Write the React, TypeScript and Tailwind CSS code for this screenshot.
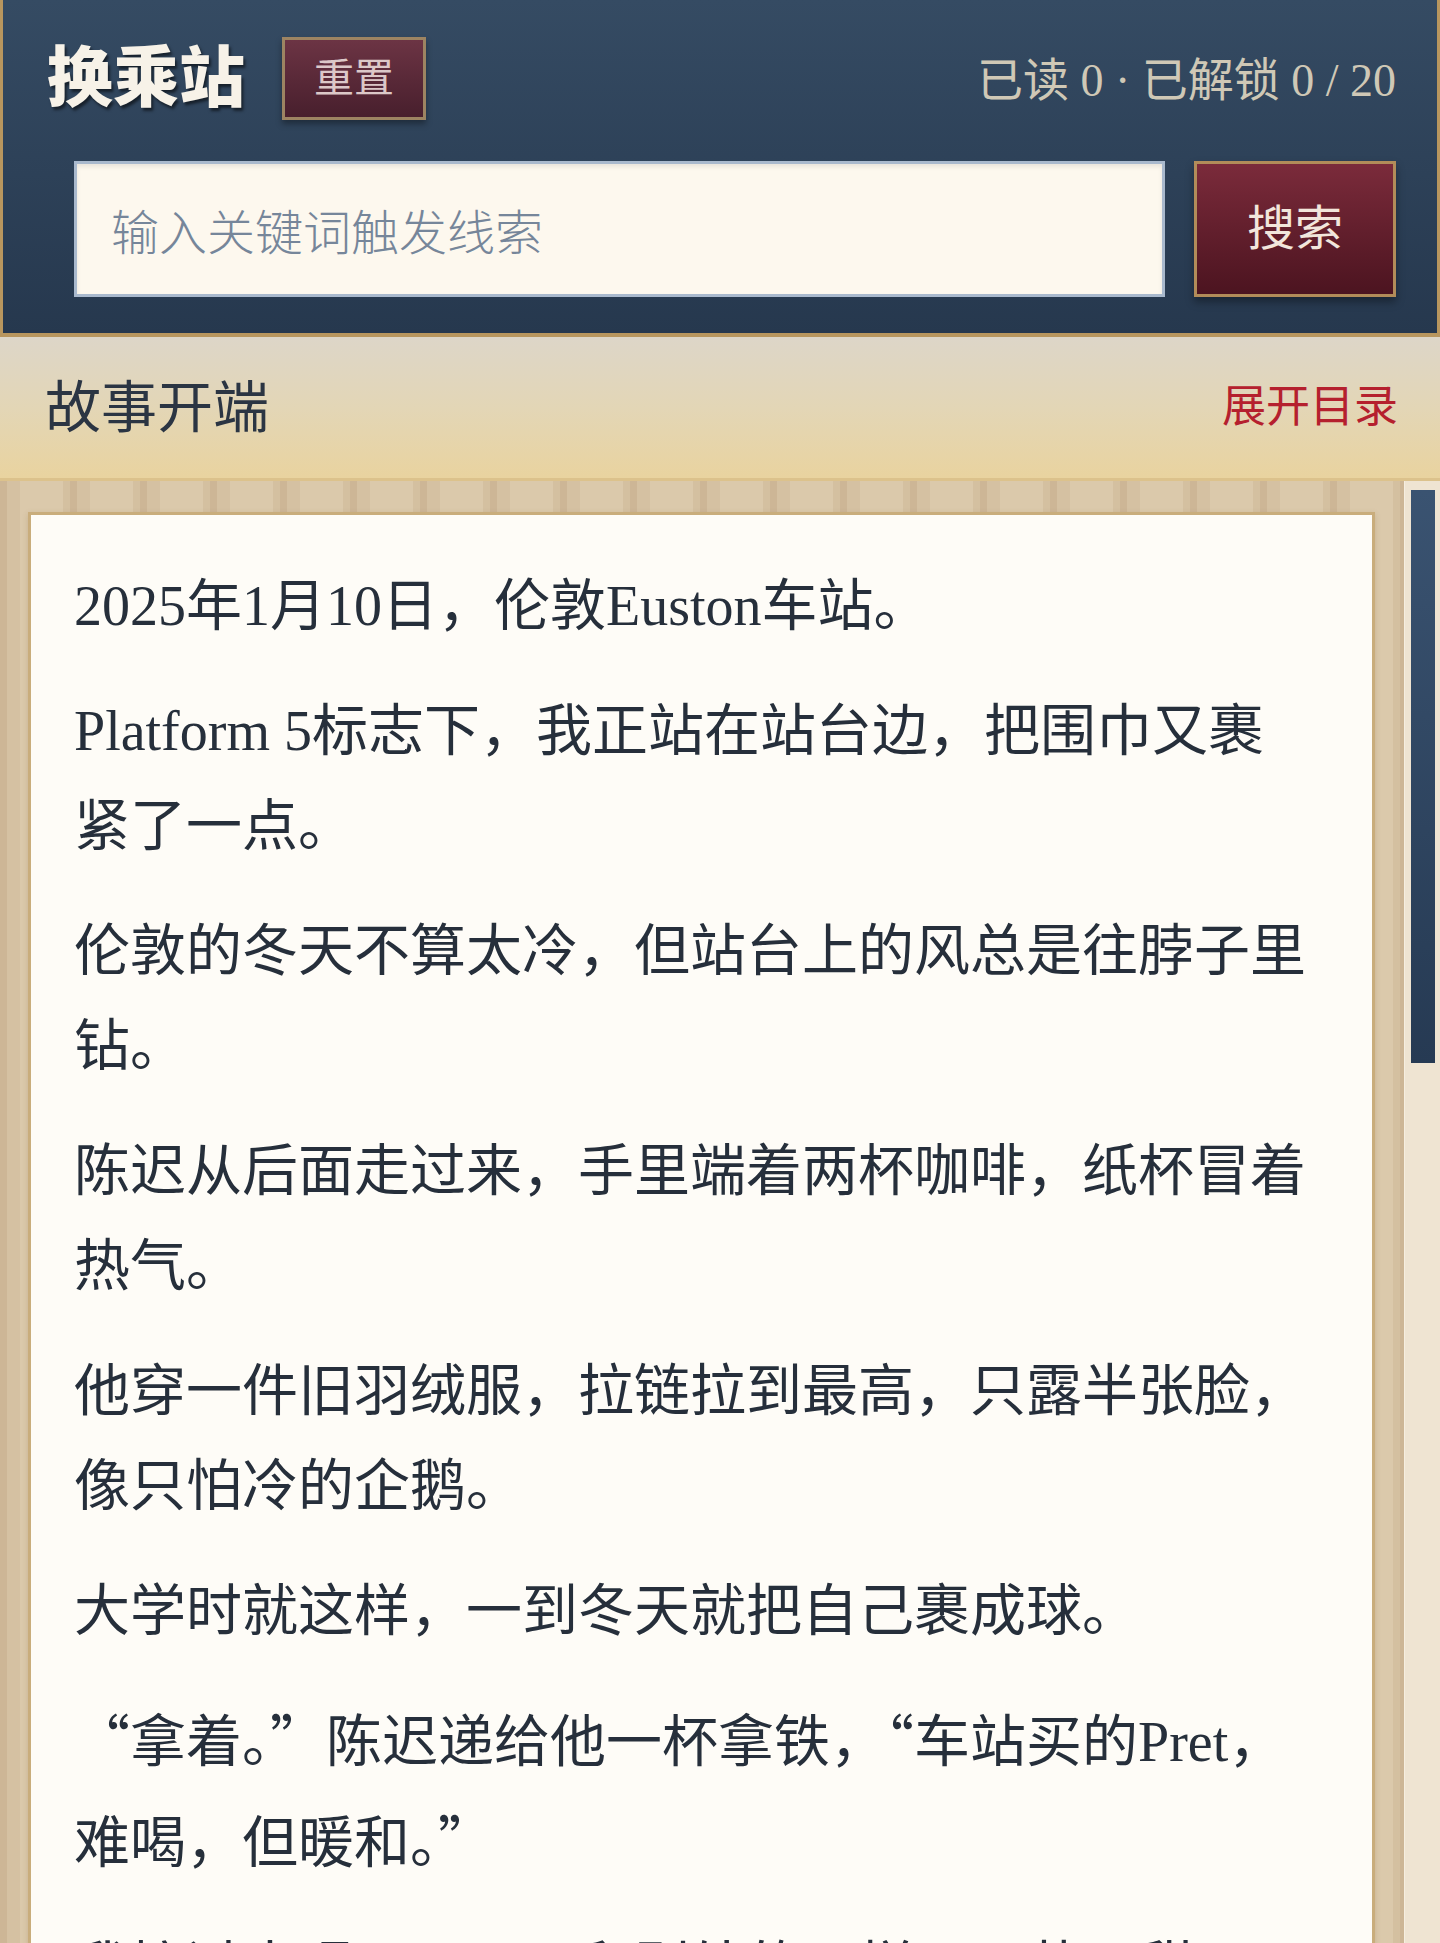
import { useState } from 'react';

const serif = { fontFamily: '"Liberation Serif", "Noto Sans CJK SC", serif' };

const paragraphs = [
  '2025年1月10日，伦敦Euston车站。',
  'Platform 5标志下，我正站在站台边，把围巾又裹紧了一点。',
  '伦敦的冬天不算太冷，但站台上的风总是往脖子里钻。',
  '陈迟从后面走过来，手里端着两杯咖啡，纸杯冒着热气。',
  '他穿一件旧羽绒服，拉链拉到最高，只露半张脸，像只怕冷的企鹅。',
  '大学时就这样，一到冬天就把自己裹成球。',
  '“拿着。”陈迟递给他一杯拿铁，“车站买的Pret，难喝，但暖和。”',
  '我接过来喝了一口，和别处的一样，又苦又甜。',
];

// CJK quotes should take a full-width box, like the rest of the Chinese text
function Line({ text }: { text: string }) {
  const parts = text.split(/([“”])/);
  return (
    <>
      {parts.map((part, i) =>
        part === '“' || part === '”' ? (
          <span key={i} style={{ fontFamily: '"Noto Sans CJK SC", sans-serif' }}>
            {part}
          </span>
        ) : (
          <span key={i}>{part}</span>
        )
      )}
    </>
  );
}

export default function App() {
  const [keyword, setKeyword] = useState('');

  return (
    <div className="h-[1943px] w-[1440px] overflow-hidden flex flex-col bg-[#efe4d2]" style={serif}>
      <header className="border-x-[3px] border-b-[4px] border-[#b8965e] bg-gradient-to-b from-[#354b63] to-[#26384e] pl-[44px] pr-[41px] pt-[37px] pb-[36px]">
        <div className="flex items-center justify-between h-[83px]">
          <div className="flex items-center gap-[37px]">
            <h1
              className="text-[66px] leading-none font-bold text-[#f7f2e8] mb-[14px] [text-shadow:2px_3px_3px_rgba(0,0,0,0.55)]"
              style={{ fontFamily: '"Noto Sans CJK SC", sans-serif', fontWeight: 900 }}
            >
              换乘站
            </h1>
            <button
              onClick={() => setKeyword('')}
              className="w-[144px] h-[83px] border-[3px] border-[#9d8462] bg-gradient-to-b from-[#6c3444] to-[#481f2d] text-[40px] leading-none text-[#dcc8c8] shadow-[0_4px_6px_rgba(0,0,0,0.35)] flex items-center justify-center"
            >
              重置
            </button>
          </div>
          <div className="text-[46px] leading-none text-[#cfc8b6] pt-[4px]">
            已读 0 · 已解锁 0 / 20
          </div>
        </div>

        <div className="mt-[41px] flex gap-[29px] pl-[27px]">
          <input
            value={keyword}
            onChange={(e) => setKeyword(e.target.value)}
            placeholder="输入关键词触发线索"
            className="flex-1 h-[136px] border-[3px] border-[#a9b9cd] bg-[#fdf8ee] pl-[34px] text-[48px] text-[#2a3442] placeholder:text-[#76869a] outline-none shadow-[inset_0_3px_4px_rgba(0,0,0,0.08)]"
            style={{ fontFamily: '"Noto Sans CJK SC", sans-serif', fontWeight: 300 }}
          />
          <button className="w-[202px] h-[136px] border-[3px] border-[#b28c59] bg-gradient-to-b from-[#7b2b3b] to-[#4c1420] text-[48px] leading-none text-[#f2e6dc] shadow-[0_5px_8px_rgba(0,0,0,0.35)] flex items-center justify-center">
            搜索
          </button>
        </div>
      </header>

      <div className="h-[144px] shrink-0 flex items-center justify-between pl-[45px] pr-[42px] border-b-[3px] border-[#dcc28c] bg-gradient-to-b from-[#ddd6c8] via-[#e3d6b6] to-[#e9d39f]">
        <h2 className="text-[56px] leading-none text-[#2b3543]">故事开端</h2>
        <button className="text-[44px] leading-none text-[#b5202e]">展开目录</button>
      </div>

      <div className="flex-1 flex min-h-0">
        <main className="flex-1 min-h-0 overflow-hidden pt-[31px] pl-[28px] pr-[29px] bg-[repeating-linear-gradient(90deg,#cdb696_0px,#cdb696_7px,#d5c1a2_7px,#d5c1a2_20px,#dbc9ab_20px,#dbc9ab_63px,#d4c0a0_63px,#d4c0a0_70px)]">
          <article className="border-[3px] border-[#c9ad7c] bg-[#fefcf7] pt-[44px] pl-[43px] pr-[56px] pb-[40px] shadow-[0_2px_6px_rgba(120,90,40,0.2)]">
            {paragraphs.map((p, i) => (
              <p key={i} className="text-[56px] leading-[95px] text-[#262f3b] mb-[30px]">
                <Line text={p} />
              </p>
            ))}
          </article>
        </main>
        <div className="w-[36px] shrink-0 border-l border-[#f6eee0] bg-[#efe4d2] pt-[9px] pl-[6px]">
          <div className="w-[24px] h-[573px] bg-gradient-to-b from-[#3a5371] to-[#263a53]" />
        </div>
      </div>
    </div>
  );
}
